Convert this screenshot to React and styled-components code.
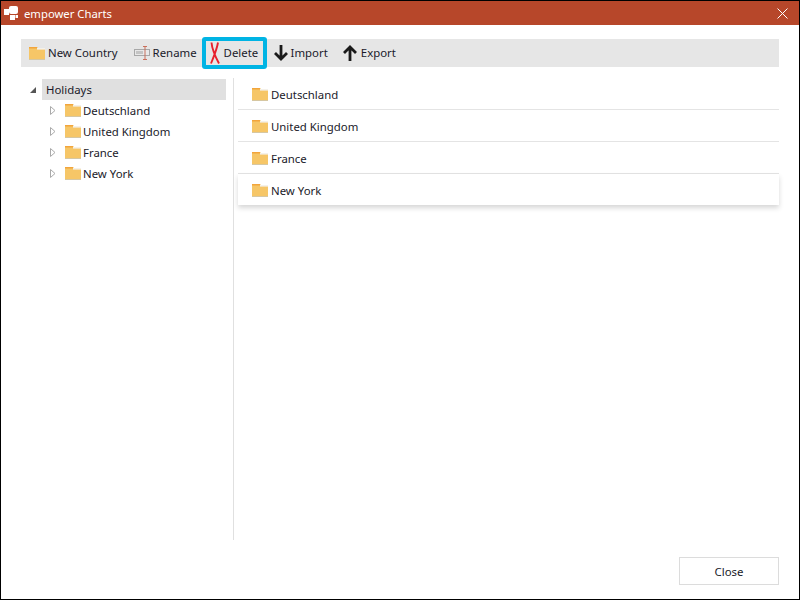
import React from "react";
import styled, { createGlobalStyle } from "styled-components";

const Global = createGlobalStyle`
  html, body { margin: 0; padding: 0; background: #fff; }
  body { font-family: "Noto Sans", "Open Sans", "Liberation Sans", sans-serif; font-size: 11.4px; color: #1a1a2a; }
`;
const Win = styled.div`
  width: 800px; height: 600px; box-sizing: border-box; border: 1px solid #000;
  display: flex; flex-direction: column; background: #fff;
`;
const TitleBar = styled.div`
  height: 24px; background: #b7472a; display: flex; align-items: center; color: #fff; padding: 0 11px 0 3px; flex: none;
`;
const TitleText = styled.span` margin-left: 4px; font-size: 11.3px; flex: 1; `;
const Content = styled.div`
  flex: 1; display: flex; flex-direction: column; padding: 14px 20px 0 20px; min-height: 0;
`;
const Toolbar = styled.div`
  height: 28px; background: #e6e6e6; display: flex; align-items: center; flex: none; padding-left: 8px;
`;
const Tool = styled.div`
  display: flex; align-items: center; gap: ${p => p.$gap ?? 3}px; margin-right: ${p => p.$mr || 0}px;
  white-space: nowrap; flex: none;
`;
const ToolLabel = styled.span` margin-top: -1px; `;
const Highlight = styled(Tool)`
  height: 32px; width: 65px; box-sizing: border-box; border: 4px solid #00b4e4; border-radius: 3px;
  padding-left: 3px; margin-right: 7px; gap: 3px;
`;
const Body = styled.div` flex: 1; display: flex; min-height: 0; margin-top: 11px; `;
const TreePane = styled.div`
  width: 212px; flex: none; height: 462px; border-right: 1px solid #e0e0e0;
`;
const TreeRoot = styled.div` display: flex; align-items: center; height: 21px; margin-top: 1px; `;
const RootLabel = styled.div`
  margin-left: 5px; width: 184px; height: 21px; background: #e0e0e0; box-sizing: border-box; padding-left: 4px;
  display: flex; align-items: center;
`;
const TreeRow = styled.div` display: flex; align-items: center; gap: 2px; height: 21px; padding-left: 29px; `;
const ListPane = styled.div` flex: 1; margin-left: 4px; `;
const ListRow = styled.div`
  height: 30px; padding: 1px 0 0 14px; display: flex; align-items: center; gap: 3px;
  border-bottom: 1px solid #e4e4e4; background: #fff;
  ${p => p.$last && "border-bottom: none; box-shadow: 0 3px 5px rgba(0,0,0,.16);"}
`;
const Footer = styled.div` height: 42px; display: flex; justify-content: flex-end; flex: none; `;
const CloseBtn = styled.div`
  width: 100px; height: 28px; box-sizing: border-box; border: 1px solid #dcdcdc; display: flex;
  align-items: center; justify-content: center; background: #fff;
`;

const Folder = () => (
  <svg width="16" height="13" viewBox="0 0 16 13" style={{ flex: "none" }}>
    <path d="M0 0 H8 L9 1 H16 V13 H0 Z" fill="#f6c667" />
    <rect x="0" y="0" width="8" height="1.5" fill="#f2a53c" />
    <rect x="8" y="1" width="8" height="1.6" fill="#f4f1ea" />
    <rect x="0" y="12.2" width="16" height=".8" fill="#cfc7b2" />
  </svg>
);
const Logo = () => (
  <svg width="16" height="16" viewBox="0 0 16 16" style={{ flex: "none" }}>
    <rect x="5" y="1" width="9" height="8" rx="2" fill="#fff" />
    <rect x="0" y="4" width="5" height="6" fill="#fff" />
    <rect x="6" y="10" width="5" height="5" fill="#fff" />
    <rect x="11.5" y="10" width="2.5" height="3" fill="#fff" />
  </svg>
);
const X = () => (
  <svg width="11" height="11" viewBox="0 0 11 11"><path d="M.5 .5 L10.5 10.5 M10.5 .5 L.5 10.5" stroke="#fff" strokeWidth="1" /></svg>
);
const RenameIcon = () => (
  <svg width="17" height="14" viewBox="0 0 17 14" style={{ flex: "none" }}>
    <rect x=".5" y="3.5" width="15" height="6" fill="#e8e8e8" stroke="#a8a8a8" />
    <rect x="2" y="5" width="7" height="3" fill="#c4c4c4" />
    <path d="M9 .5 H13 M11 .5 V13.5 M9 13.5 H13" stroke="#c9705c" strokeWidth="1" fill="none" />
  </svg>
);
const DeleteIcon = () => (
  <svg width="12" height="22" viewBox="0 0 12 22" style={{ flex: "none" }}>
    <path d="M2.5 .5 C3 7 6 14 10 21.5 M9 .5 C8 7 5 14 2 21.5" stroke="#e8202c" strokeWidth="1.9" fill="none" />
  </svg>
);
const Down = () => (
  <svg width="14" height="16" viewBox="0 0 14 16" style={{ flex: "none" }}>
    <path d="M7 0 V14 M1 8 L7 14 L13 8" stroke="#1a1a1a" strokeWidth="2.8" fill="none" />
  </svg>
);
const Up = () => (
  <svg width="14" height="16" viewBox="0 0 14 16" style={{ flex: "none" }}>
    <path d="M7 16 V2 M1 8 L7 2 L13 8" stroke="#1a1a1a" strokeWidth="2.8" fill="none" />
  </svg>
);
const Collapse = () => (
  <svg width="8" height="8" viewBox="0 0 8 8" style={{ flex: "none", marginLeft: 8 }}><path d="M7 1 V7 H1 Z" fill="#555" /></svg>
);
const Expand = () => (
  <svg width="6" height="9" viewBox="0 0 6 9" style={{ flex: "none", marginRight: 7 }}><path d="M.5 .5 L5 4.5 L.5 8.5 Z" fill="#fff" stroke="#aaa" /></svg>
);

const names = ["Deutschland", "United Kingdom", "France", "New York"];

export default function App() {
  return (
    <Win>
      <Global />
      <TitleBar>
        <Logo />
        <TitleText>empower Charts</TitleText>
        <X />
      </TitleBar>
      <Content>
        <Toolbar>
          <Tool $mr={16}><Folder /><ToolLabel>New Country</ToolLabel></Tool>
          <Tool $mr={5} $gap={2}><RenameIcon /><ToolLabel>Rename</ToolLabel></Tool>
          <Highlight><DeleteIcon /><ToolLabel>Delete</ToolLabel></Highlight>
          <Tool $mr={15}><Down /><ToolLabel>Import</ToolLabel></Tool>
          <Tool $gap={4}><Up /><ToolLabel>Export</ToolLabel></Tool>
        </Toolbar>
        <Body>
          <TreePane>
            <TreeRoot><Collapse /><RootLabel>Holidays</RootLabel></TreeRoot>
            {names.map(n => (
              <TreeRow key={n}><Expand /><Folder />{n}</TreeRow>
            ))}
          </TreePane>
          <ListPane>
            {names.map((n, i) => (
              <ListRow key={n} $last={i === 3}><Folder /> {n}</ListRow>
            ))}
          </ListPane>
        </Body>
        <Footer><CloseBtn>Close</CloseBtn></Footer>
      </Content>
    </Win>
  );
}
